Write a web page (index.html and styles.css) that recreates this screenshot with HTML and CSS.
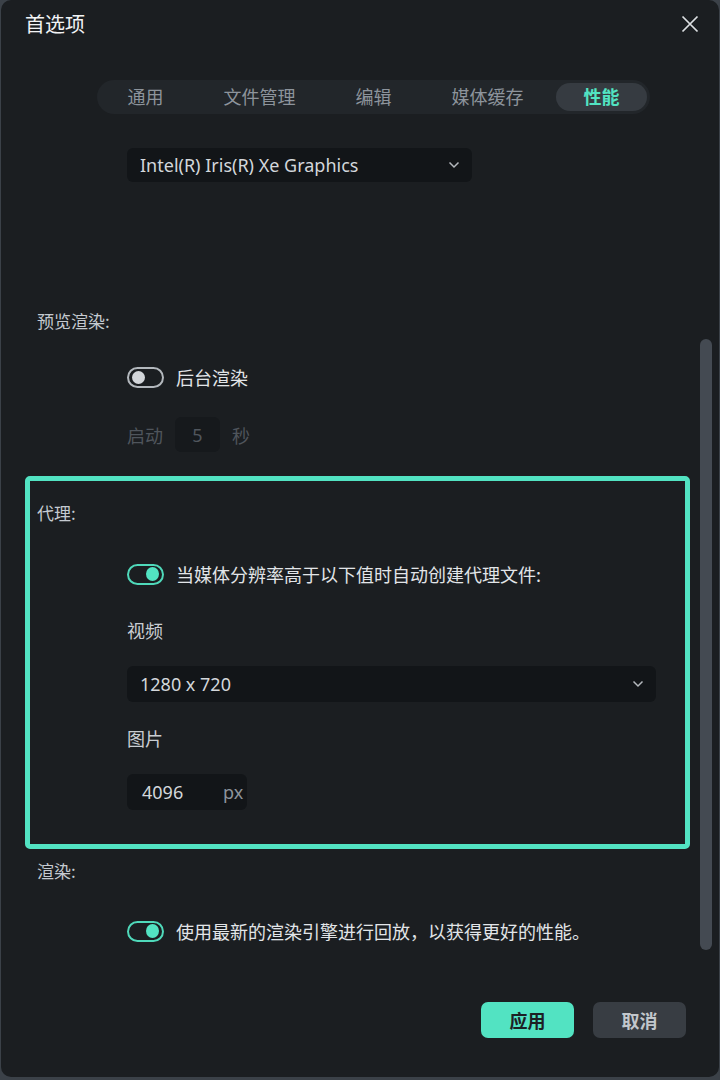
FILE: index.html
```html
<!DOCTYPE html>
<html lang="zh-CN">
<head>
<meta charset="utf-8">
<title>首选项</title>
<link rel="stylesheet" href="styles.css">
</head>
<body>
<div class="dialog">
  <div class="header">
    <span class="title">首选项</span>
    <svg class="close" width="18" height="18" viewBox="0 0 18 18"><path d="M1.5 1.5 L16.5 16.5 M16.5 1.5 L1.5 16.5" stroke="#dcdfe2" stroke-width="1.7" fill="none"/></svg>
  </div>

  <div class="tabs">
    <div class="tab">通用</div>
    <div class="tab">文件管理</div>
    <div class="tab">编辑</div>
    <div class="tab">媒体缓存</div>
    <div class="tab active">性能</div>
  </div>

  <div class="select gpu">
    <span>Intel(R) Iris(R) Xe Graphics</span>
    <svg class="chev" width="12" height="8" viewBox="0 0 12 8"><path d="M1.5 1.5 L6 6 L10.5 1.5" stroke="#b4b8bd" stroke-width="1.5" fill="none"/></svg>
  </div>

  <div class="section-label preview">预览渲染:</div>
  <div class="toggle-row r-bg">
    <span class="toggle off"><span class="knob"></span></span>
    <span class="toggle-text">后台渲染</span>
  </div>
  <div class="start-row">
    <span class="dim">启动</span>
    <span class="num-box">5</span>
    <span class="dim">秒</span>
  </div>

  <div class="highlight">
    <div class="section-label inbox">代理:</div>
    <div class="toggle-row r-proxy">
      <span class="toggle on"><span class="knob"></span></span>
      <span class="toggle-text">当媒体分辨率高于以下值时自动创建代理文件:</span>
    </div>
    <div class="sub-label r-video">视频</div>
    <div class="select res">
      <span>1280 x 720</span>
      <svg class="chev" width="12" height="8" viewBox="0 0 12 8"><path d="M1.5 1.5 L6 6 L10.5 1.5" stroke="#b4b8bd" stroke-width="1.5" fill="none"/></svg>
    </div>
    <div class="sub-label r-img">图片</div>
    <div class="px-box">
      <span class="px-val">4096</span>
      <span class="px-unit">px</span>
    </div>
  </div>

  <div class="section-label render">渲染:</div>
  <div class="toggle-row r-render">
    <span class="toggle on"><span class="knob"></span></span>
    <span class="toggle-text">使用最新的渲染引擎进行回放，以获得更好的性能。</span>
  </div>

  <div class="footer">
    <button class="btn primary">应用</button>
    <button class="btn secondary">取消</button>
  </div>

  <div class="scrollbar"></div>
</div>
</body>
</html>
```

FILE: styles.css
```css
* { box-sizing: border-box; }

html, body {
  margin: 0;
  padding: 0;
  background: #3b4148;
  width: 720px;
  height: 1080px;
  overflow: hidden;
}

body {
  font-family: "Noto Sans", "Noto Sans CJK SC", sans-serif;
  font-size: 18px;
  color: #c9cdd2;
}

.dialog {
  position: relative;
  width: 718px;
  height: 1077px;
  margin-left: 1px;
  background: #1b1e21;
  border-radius: 10px;
  overflow: hidden;
}

.header {
  height: 48px;
  display: flex;
  align-items: center;
  justify-content: space-between;
  padding: 0 20px 0 24px;
}

.title {
  font-family: "Noto Sans CJK SC", sans-serif;
  font-size: 20px;
  color: #f2f3f5;
  line-height: 24px;
}

.close { display: block; }

.tabs {
  margin: 32px 0 0 96px;
  width: 553px;
  height: 34px;
  padding: 3px;
  border-radius: 17px;
  background: #22262a;
  display: flex;
  gap: 23px;
}

.tab {
  width: 91px;
  height: 28px;
  border-radius: 14px;
  display: flex;
  align-items: center;
  justify-content: center;
  font-family: "Noto Sans CJK SC", sans-serif;
  font-size: 18px;
  color: #8d949c;
  line-height: 26px;
  padding-bottom: 2px;
}

.tab.active {
  background: #363b41;
  color: #52e3c2;
  font-weight: 700;
}

.select {
  margin-left: 126px;
  height: 34px;
  background: #121518;
  border-radius: 6px;
  display: flex;
  align-items: center;
  justify-content: space-between;
  padding: 0 12px 0 13px;
  color: #d3d7db;
  font-size: 18px;
}

.select .chev { display: block; }

.gpu {
  margin-top: 34px;
  width: 345px;
}

.section-label {
  font-family: "Noto Sans CJK SC", sans-serif;
  font-size: 17px;
  line-height: 24px;
  height: 24px;
  color: #c5cad0;
  margin-left: 36px;
}

.preview { margin-top: 127px; }

.toggle-row {
  margin-left: 126px;
  height: 24px;
  display: flex;
  align-items: center;
  gap: 12px;
}

.r-bg { margin-top: 32px; }

.toggle {
  width: 37px;
  height: 21px;
  border-radius: 11px;
  border: 2px solid #b3b8bd;
  display: flex;
  align-items: center;
  padding: 0 3px;
}

.toggle .knob {
  width: 13px;
  height: 13px;
  border-radius: 50%;
  background: #d3d6da;
}

.toggle.on {
  border-color: #4fd9ba;
  justify-content: flex-end;
}

.toggle.on .knob {
  background: #52e3c2;
  width: 13px;
  height: 14px;
}

.toggle-text {
  font-family: "Noto Sans CJK SC", sans-serif;
  font-size: 18px;
  line-height: 24px;
  color: #e2e5e8;
  padding-bottom: 1px;
}

.start-row {
  margin: 28px 0 0 126px;
  height: 35px;
  display: flex;
  align-items: center;
}

.dim {
  font-family: "Noto Sans CJK SC", sans-serif;
  font-size: 18px;
  color: #4f555c;
}

.num-box {
  width: 45px;
  height: 35px;
  margin: 0 12px;
  border-radius: 6px;
  background: #16191c;
  color: #50565d;
  display: flex;
  align-items: center;
  justify-content: center;
  font-size: 18px;
}

.highlight {
  margin: 24px 0 0 24px;
  width: 665px;
  height: 373px;
  border: 5px solid #52e3c2;
  border-radius: 5px;
  padding: 20px 0 0 0;
}

.section-label.inbox { margin-left: 7px; }

.r-proxy { margin: 37px 0 0 97px; }

.sub-label {
  margin-left: 97px;
  font-family: "Noto Sans CJK SC", sans-serif;
  font-size: 18px;
  line-height: 24px;
  height: 24px;
  color: #c9cdd2;
}

.r-video { margin-top: 32px; }

.res {
  margin: 24px 0 0 97px;
  width: 529px;
  height: 36px;
}

.r-img { margin-top: 24px; }

.px-box {
  margin: 24px 0 0 97px;
  width: 120px;
  height: 36px;
  border-radius: 6px;
  background: #121518;
  display: flex;
  align-items: center;
  padding-left: 15px;
  font-size: 18px;
}

.px-val { color: #d3d7db; width: 81px; }
.px-unit { color: #8d949c; }

.render { margin-top: 10px; }

.r-render { margin-top: 36px; }

.footer {
  margin: 59px 0 0 480px;
  display: flex;
  gap: 19px;
}

.btn {
  width: 93px;
  height: 36px;
  border: none;
  border-radius: 7px;
  font-family: "Noto Sans CJK SC", sans-serif;
  font-size: 18px;
  font-weight: 700;
  padding: 0;
}

.btn.primary {
  background: #52e3c2;
  color: #1d2024;
}

.btn.secondary {
  background: #383d43;
  color: #c2c7cc;
}

.scrollbar {
  position: absolute;
  left: 699px;
  top: 339px;
  width: 12px;
  height: 611px;
  border-radius: 6px;
  background: #444a52;
}
```
